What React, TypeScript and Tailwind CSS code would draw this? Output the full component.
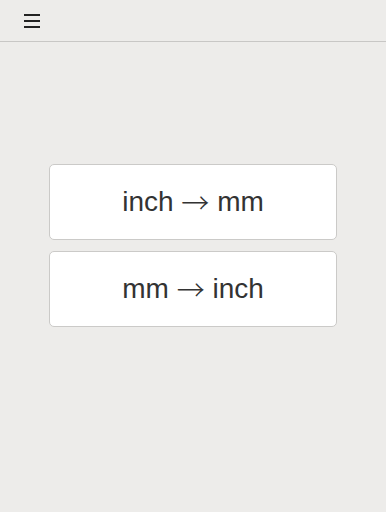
const conversions = [
  { from: "inch", to: "mm" },
  { from: "mm", to: "inch" },
];

export default function App() {
  return (
    <div className="w-[386px] h-[512px] bg-[#edecea] flex flex-col font-['Liberation_Sans',Arial,sans-serif]">
      <header className="h-[42px] border-b border-[#c8c7c5] flex items-center px-6 shrink-0">
        <button className="flex flex-col gap-[4px] w-4">
          <span className="block h-[2px] w-4 bg-[#222]" />
          <span className="block h-[2px] w-4 bg-[#222]" />
          <span className="block h-[2px] w-4 bg-[#222]" />
        </button>
      </header>
      <main className="flex flex-col items-center pt-[122px] gap-[11px]">
        {conversions.map((c) => (
          <button
            key={c.from}
            className="w-[288px] h-[76px] bg-white border border-[#cbcac8] rounded-[5px] flex items-center justify-center text-[28px] leading-none text-[#333]"
          >
            <span>
              {c.from}{" "}
              <span className="font-['Noto_Sans_CJK_JP',sans-serif] font-light leading-none align-[-3px]">→</span>{" "}
              {c.to}
            </span>
          </button>
        ))}
      </main>
    </div>
  );
}
